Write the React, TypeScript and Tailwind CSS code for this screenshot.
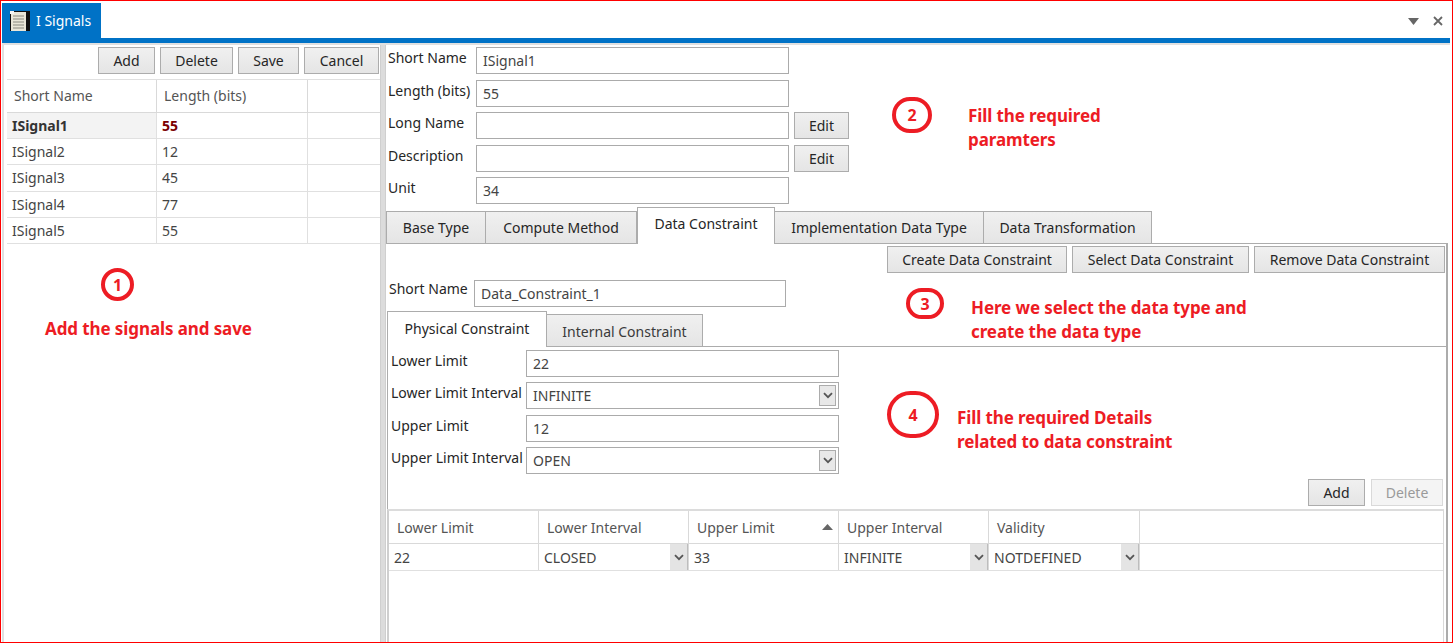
import type { ReactNode } from "react"

const font = "font-['Noto_Sans','Open_Sans',sans-serif]"

const signals = [
  ["ISignal1", "55"],
  ["ISignal2", "12"],
  ["ISignal3", "45"],
  ["ISignal4", "77"],
  ["ISignal5", "55"],
]

function Btn({ w, children, disabled }: { w: string; children: ReactNode; disabled?: boolean }) {
  return (
    <div
      className={`${w} h-[27px] shrink-0 flex items-center justify-center border text-[14px] ${
        disabled
          ? "bg-[#f4f4f4] text-[#9a9a9a] border-[#d9d9d9]"
          : "bg-gradient-to-b from-[#f0f0f0] to-[#e5e5e5] text-[#262626] border-[#acacac]"
      }`}
    >
      {children}
    </div>
  )
}

function Chevron({ className }: { className?: string }) {
  return (
    <svg width="10" height="7" viewBox="0 0 10 7" className={className}>
      <path d="M1 1.2 L5 5.2 L9 1.2" fill="none" stroke="#555" strokeWidth="1.8" />
    </svg>
  )
}

function Field({ w, value }: { w: string; value: string }) {
  return (
    <div className={`${w} h-[27px] shrink-0 flex items-center px-[6px] border border-[#ababab] bg-white text-[14px] text-[#444]`}>
      {value}
    </div>
  )
}

function Select({ value }: { value: string }) {
  return (
    <div className="w-[313px] h-[27px] shrink-0 flex items-center justify-between pl-[6px] pr-[2px] border border-[#ababab] bg-white text-[14px] text-[#444]">
      {value}
      <div className="w-[17px] h-[21px] flex items-center justify-center border border-[#acacac] bg-[#e8e8e8]">
        <Chevron />
      </div>
    </div>
  )
}

function Row({ label, labelW, children, mt, raise }: { label: string; labelW: string; children: ReactNode; mt?: string; raise?: string }) {
  return (
    <div className={`flex items-center ${mt ?? ""}`}>
      <div className={`${labelW} shrink-0 ${raise ?? "pb-[6px]"} text-[14px] text-[#262626] whitespace-nowrap`}>{label}</div>
      {children}
    </div>
  )
}

function Tab({ w, children, active, muted }: { w: string; children: ReactNode; active?: boolean; muted?: boolean }) {
  return active ? (
    <div className={`${w} ${muted ? "h-[36px] pb-[2px]" : "h-[37px] pb-[5px]"} shrink-0 flex items-center justify-center bg-white border border-b-0 border-[#acacac] text-[14px] text-[#262626] relative z-10 -mb-px`}>
      {children}
    </div>
  ) : (
    <div className={`${w} h-[32px] shrink-0 flex items-center justify-center ${muted ? "pt-[2px] text-[#3a3a3a]" : "text-[#262626]"} bg-gradient-to-b from-[#f0f0f0] to-[#e5e5e5] border border-b-0 border-l-0 border-[#acacac] text-[14px]`}>
      {children}
    </div>
  )
}

function GridCell({ w, children, combo }: { w: string; children: ReactNode; combo?: boolean }) {
  return (
    <div className={`${w} shrink-0 h-full flex items-center justify-between pl-[5px] border-r border-[#d9d9d9] text-[14px] text-[#444]`}>
      {children}
      {combo && (
        <div className="w-[18px] h-full flex items-center justify-center bg-[#e4e4e4] border-r border-[#bdbdbd]">
          <Chevron />
        </div>
      )}
    </div>
  )
}

function Circle({ n, className }: { n: string; className: string }) {
  return (
    <div className={`absolute flex items-center justify-center rounded-full border-[4px] border-[#ed1c24] text-[16px] font-bold text-[#ed1c24] ${className}`}>
      {n}
    </div>
  )
}

function Note({ className, children }: { className: string; children: ReactNode }) {
  return <div className={`absolute text-[17px] leading-[24px] font-bold tracking-[-0.1px] text-[#ed1c24] whitespace-nowrap ${className}`}>{children}</div>
}

export default function App() {
  return (
    <div className={`relative w-[1453px] h-[643px] overflow-hidden bg-white border border-[#ff0000] ${font}`}>
      {/* title strip */}
      <div className="h-[37px] pl-[1px] pr-[9px] flex items-end justify-between">
        <div className="w-[99px] h-[35px] bg-[#0072c6] flex items-center pl-[8px] gap-[6px] text-white text-[14px]">
          <svg width="20" height="20" viewBox="0 0 20 20" className="shrink-0">
            <rect x="0" y="0" width="20" height="20" fill="#111" />
            <rect x="1" y="1" width="15" height="19" fill="#e9e6d8" />
            <path d="M0 0 H4 V3 H0 Z" fill="#f5f5f5" />
            <path d="M3 5 H14 M3 8 H14 M3 11 H14 M3 14 H14 M3 17 H14" stroke="#8a8a80" strokeWidth="1" />
          </svg>
          <span className="whitespace-nowrap">I Signals</span>
        </div>
        <div className="flex items-center gap-[14px] pb-[12px]">
          <svg width="11" height="7" viewBox="0 0 11 7">
            <path d="M0 0 H11 L5.5 7 Z" fill="#666" />
          </svg>
          <svg width="10" height="10" viewBox="0 0 10 10">
            <path d="M1 1 L9 9 M9 1 L1 9" stroke="#666" strokeWidth="1.8" />
          </svg>
        </div>
      </div>
      <div className="ml-[1px] mr-[2px] h-[5px] bg-[#0072c6]" />
      <div className="ml-[1px] mr-[2px] h-[2px] bg-[#e0e0e0]" />

      <div className="flex h-[598px] pl-[1px]">
        {/* left panel */}
        <div className="w-[378px] shrink-0 pl-[2px] border-l-[2px] border-[#e0e0e0]">
          <div className="flex justify-end gap-[5px] pt-[2px] pr-[1px]">
            <Btn w="w-[57px]">Add</Btn>
            <Btn w="w-[73px]">Delete</Btn>
            <Btn w="w-[61px]">Save</Btn>
            <Btn w="w-[75px]">Cancel</Btn>
          </div>
          <div className="mt-[5px] ml-[1px] border-t border-[#e0e0e0]">
            <div className="flex h-[32.5px] border-b border-[#d9d9d9] text-[14px] text-[#555]">
              <div className="w-[150px] flex items-center pl-[7px] border-r border-[#d9d9d9]">Short Name</div>
              <div className="w-[151px] flex items-center pl-[7px] border-r border-[#d9d9d9]">Length (bits)</div>
            </div>
            {signals.map(([name, len], i) => (
              <div key={name} className="flex h-[26.4px] border-b border-[#e0e0e0] text-[14px] text-[#444]">
                <div className={`w-[150px] flex items-center pl-[5px] border-r border-[#e0e0e0] ${i === 0 ? "bg-[#f3f3f3] font-bold text-[#333]" : ""}`}>{name}</div>
                <div className={`w-[151px] flex items-center pl-[5px] border-r border-[#e0e0e0] ${i === 0 ? "font-bold text-[#7b0000]" : ""}`}>{len}</div>
              </div>
            ))}
          </div>
        </div>

        {/* splitter */}
        <div className="w-[6px] shrink-0 bg-[#dcdcdc] border-x border-[#cfcfcf]" />

        {/* right panel */}
        <div className="w-[1062px] shrink-0 pt-[2px] flex flex-col">
          <div className="pl-[2px]">
            <Row label="Short Name" labelW="w-[88px]"><Field w="w-[313px]" value="ISignal1" /></Row>
            <Row label="Length (bits)" labelW="w-[88px]" mt="mt-[6px]"><Field w="w-[313px]" value="55" /></Row>
            <Row label="Long Name" labelW="w-[88px]" mt="mt-[5px]">
              <Field w="w-[313px]" value="" />
              <div className="ml-[5px]"><Btn w="w-[55px]">Edit</Btn></div>
            </Row>
            <Row label="Description" labelW="w-[88px]" mt="mt-[6px]">
              <Field w="w-[313px]" value="" />
              <div className="ml-[5px]"><Btn w="w-[55px]">Edit</Btn></div>
            </Row>
            <Row label="Unit" labelW="w-[88px]" mt="mt-[5px]"><Field w="w-[313px]" value="34" /></Row>
          </div>

          {/* outer tabs */}
          <div className="mt-[4px] h-[36px] shrink-0 flex items-end border-b border-[#acacac]">
            <div className="w-[100px] h-[32px] shrink-0 flex items-center justify-center bg-gradient-to-b from-[#f0f0f0] to-[#e5e5e5] border border-b-0 border-[#acacac] text-[14px] text-[#262626]">Base Type</div>
            <Tab w="w-[151px]">Compute Method</Tab>
            <Tab w="w-[138px]" active>Data Constraint</Tab>
            <Tab w="w-[209px]">Implementation Data Type</Tab>
            <Tab w="w-[168px]">Data Transformation</Tab>
          </div>

          <div className="flex-1 border-r-[2px] border-[#acacac]">
            <div className="flex justify-end gap-[5px] mt-[2px] pr-[1px]">
              <Btn w="w-[180px]">Create Data Constraint</Btn>
              <Btn w="w-[177px]">Select Data Constraint</Btn>
              <Btn w="w-[191px]">Remove Data Constraint</Btn>
            </div>

            <div className="pl-[3px] mt-[5px]">
              <Row label="Short Name" labelW="w-[85px]" raise="pb-[9px]"><Field w="w-[312px]" value="Data_Constraint_1" /></Row>
            </div>

            {/* inner tabs */}
            <div className="mt-[3px] h-[36px] flex items-end border-b border-[#acacac] ml-[1px]">
              <Tab w="w-[160px]" active muted>Physical Constraint</Tab>
              <Tab w="w-[156px]" muted>Internal Constraint</Tab>
            </div>

            <div className="ml-[1px] border-l border-[#acacac] pl-[3px] pr-[3px] pt-[3px] h-[162px]">
              <Row label="Lower Limit" labelW="w-[135px]"><Field w="w-[313px]" value="22" /></Row>
              <Row label="Lower Limit Interval" labelW="w-[135px]" mt="mt-[5px]"><Select value="INFINITE" /></Row>
              <Row label="Upper Limit" labelW="w-[135px]" mt="mt-[6px]"><Field w="w-[313px]" value="12" /></Row>
              <Row label="Upper Limit Interval" labelW="w-[135px]" mt="mt-[5px]"><Select value="OPEN" /></Row>
              <div className="flex justify-end gap-[6px] mt-[5px]">
                <Btn w="w-[57px]">Add</Btn>
                <Btn w="w-[72px]" disabled>Delete</Btn>
              </div>
            </div>

            {/* constraint grid */}
            <div className="ml-[1px] mr-[2px] border-l-[2px] border-l-[#cfcfcf] border-t-[2px] border-t-[#dcdcdc] border-r border-r-[#d9d9d9] h-[137px]">
              <div className="flex h-[33px] border-b border-[#d9d9d9]">
                <GridCell w="w-[150px]"><span className="pl-[3px] text-[#555]">Lower Limit</span></GridCell>
                <GridCell w="w-[150px]"><span className="pl-[3px] text-[#555]">Lower Interval</span></GridCell>
                <div className="w-[150px] shrink-0 h-full flex items-center justify-between pl-[8px] pr-[5px] border-r border-[#d9d9d9] text-[14px] text-[#555]">
                  Upper Limit
                  <svg width="11" height="6" viewBox="0 0 11 6"><path d="M5.5 0 L11 6 H0 Z" fill="#666" /></svg>
                </div>
                <GridCell w="w-[150px]"><span className="pl-[3px] text-[#555]">Upper Interval</span></GridCell>
                <GridCell w="w-[151px]"><span className="pl-[3px] text-[#555]">Validity</span></GridCell>
              </div>
              <div className="flex h-[27px] border-b border-[#e0e0e0]">
                <GridCell w="w-[150px]">22</GridCell>
                <GridCell w="w-[150px]" combo>CLOSED</GridCell>
                <GridCell w="w-[150px]">33</GridCell>
                <GridCell w="w-[150px]" combo>INFINITE</GridCell>
                <GridCell w="w-[151px]" combo>NOTDEFINED</GridCell>
              </div>
            </div>
          </div>
        </div>
      </div>

      {/* red annotations drawn over the window */}
      <Circle n="1" className="left-[100px] top-[267px] w-[33px] h-[33px]" />
      <Note className="left-[44px] top-[316px]">Add the signals and save</Note>
      <Circle n="2" className="left-[891px] top-[96px] w-[40px] h-[36px]" />
      <Note className="left-[967px] top-[103px]">Fill the required<br />paramters</Note>
      <Circle n="3" className="left-[905px] top-[287px] w-[38px] h-[31px]" />
      <Note className="left-[970px] top-[295px]">Here we select the data type and<br />create the data type</Note>
      <Circle n="4" className="left-[886px] top-[390px] w-[52px] h-[47px]" />
      <Note className="left-[956px] top-[405px]">Fill the required Details<br />related to data constraint</Note>
    </div>
  )
}
